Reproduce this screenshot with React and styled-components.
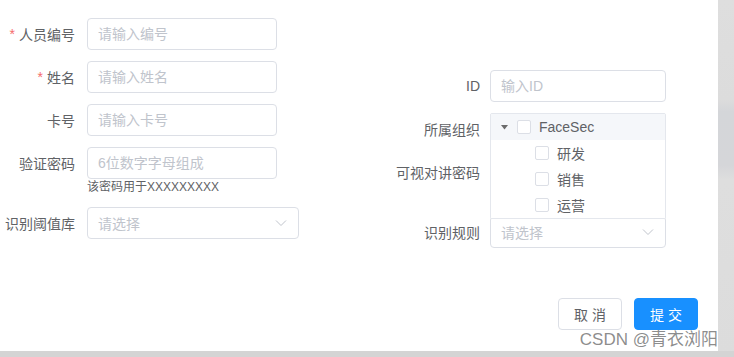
import React from "react";
import styled, { createGlobalStyle } from "styled-components";

const Global = createGlobalStyle`
  html, body {
    margin: 0;
    padding: 0;
    width: 734px;
    height: 357px;
    overflow: hidden;
    background: linear-gradient(to bottom, #dedede 0px, #dcdcdc 100px, #d4d6d9 112px, #d5d6d9 165px, #dedede 180px, #dcdcdc 357px);
  }
  * { box-sizing: border-box; }
  body {
    font-family: "Liberation Sans", "Noto Sans CJK SC", sans-serif;
  }
`;

const Page = styled.div`
  width: 734px;
  height: 357px;
  display: flex;
  flex-direction: column;
`;

const Panel = styled.div`
  width: 718px;
  height: 351px;
  background: #fff;
  position: relative;
  display: flex;
  flex-direction: column;
`;

const BottomStrip = styled.div`
  height: 6px;
  width: 734px;
  background: #d4d4d4;
`;

const FormArea = styled.div`
  display: flex;
  align-items: flex-start;
`;

const Column = styled.div`
  width: ${(p) => p.$w}px;
  padding-top: ${(p) => p.$top}px;
  display: flex;
  flex-direction: column;
`;

const FormItem = styled.div`
  display: flex;
  align-items: flex-start;
  margin-bottom: ${(p) => p.$mb ?? 11}px;
`;

const Label = styled.label`
  flex: none;
  width: ${(p) => p.$w}px;
  height: 32px;
  padding-right: ${(p) => p.$pr}px;
  display: flex;
  align-items: center;
  justify-content: flex-end;
  white-space: nowrap;
  font-size: 14px;
  color: #606266;
`;

const Star = styled.span`
  color: #f56c6c;
  margin-right: 4px;
`;

const Control = styled.div`
  position: relative;
  display: flex;
  flex-direction: column;
`;

const Input = styled.input`
  width: ${(p) => p.$w}px;
  height: 32px;
  border: 1px solid #dcdfe6;
  border-radius: 4px;
  padding: 0 10px;
  font-family: "Liberation Sans", "Noto Sans CJK SC", sans-serif;
  font-size: 14px;
  color: #606266;
  background: #fff;
  outline: none;
  &::placeholder {
    color: #c0c4cc;
  }
`;

const Helper = styled.div`
  font-size: 12px;
  line-height: 17px;
  color: #606266;
  white-space: nowrap;
`;

const SelectBox = styled.div`
  width: ${(p) => p.$w}px;
  height: 32px;
  border: 1px solid #dcdfe6;
  border-radius: 4px;
  padding: 0 11px 0 10px;
  display: flex;
  align-items: center;
  justify-content: space-between;
  background: #fff;
  font-size: 14px;
  color: #c0c4cc;
`;

const Chevron = () => (
  <svg width="12" height="8" viewBox="0 0 12 8">
    <polyline points="1,1.5 6,6.5 11,1.5" fill="none" stroke="#c0c4cc" strokeWidth="1" />
  </svg>
);

const TreePanel = styled.div`
  position: absolute;
  top: 0;
  left: 0;
  z-index: 2;
  width: 176px;
  background: #fff;
  border: 1px solid #e4e7ed;
  border-radius: 2px;
`;

const TreeRow = styled.div`
  height: 26px;
  display: flex;
  align-items: center;
  padding-left: ${(p) => 10 + p.$level * 18}px;
  background: ${(p) => (p.$active ? "#f5f7fa" : "#fff")};
  font-size: 14px;
  color: #606266;
`;

const Expander = styled.span`
  width: 7px;
  height: 7px;
  margin-right: 9px;
  display: flex;
  align-items: center;
  justify-content: center;
`;

const Check = styled.span`
  width: 14px;
  height: 14px;
  border: 1px solid #dcdfe6;
  border-radius: 2px;
  background: #fff;
  margin-right: 8px;
  flex: none;
`;

const Footer = styled.div`
  margin-top: auto;
  padding: 0 20px 21px 0;
  display: flex;
  justify-content: flex-end;
  gap: 12px;
`;

const Button = styled.button`
  width: 64px;
  height: 32px;
  border-radius: 4px;
  border: 1px solid ${(p) => (p.$primary ? "#1890ff" : "#dcdfe6")};
  background: ${(p) => (p.$primary ? "#1890ff" : "#fff")};
  color: ${(p) => (p.$primary ? "#fff" : "#606266")};
  font-family: "Liberation Sans", "Noto Sans CJK SC", sans-serif;
  font-size: 14px;
  padding: 0;
  cursor: pointer;
`;

const Watermark = styled.div`
  position: absolute;
  right: 0;
  bottom: 0;
  font-size: 17px;
  line-height: 22px;
  color: rgba(120, 120, 120, 0.85);
  white-space: nowrap;
  pointer-events: none;
`;

const TreeNode = ({ level, active, expander, children }) => (
  <TreeRow $level={level} $active={active}>
    <Expander>
      {expander && (
        <svg width="7" height="5" viewBox="0 0 7 5">
          <polygon points="0,0 7,0 3.5,4.5" fill="#6b6b6b" />
        </svg>
      )}
    </Expander>
    <Check />
    <span>{children}</span>
  </TreeRow>
);

export default function App() {
  return (
    <>
      <Global />
      <Page>
        <Panel>
          <FormArea>
            <Column $w={390} $top={18}>
              <FormItem>
                <Label $w={87} $pr={12}>
                  <Star>*</Star>人员编号
                </Label>
                <Input $w={190} placeholder="请输入编号" />
              </FormItem>
              <FormItem>
                <Label $w={87} $pr={12}>
                  <Star>*</Star>姓名
                </Label>
                <Input $w={190} placeholder="请输入姓名" />
              </FormItem>
              <FormItem>
                <Label $w={87} $pr={12}>卡号</Label>
                <Input $w={190} placeholder="请输入卡号" />
              </FormItem>
              <FormItem $mb={11}>
                <Label $w={87} $pr={12}>验证密码</Label>
                <Control>
                  <Input $w={190} placeholder="6位数字字母组成" />
                  <Helper>该密码用于XXXXXXXXX</Helper>
                </Control>
              </FormItem>
              <FormItem>
                <Label $w={87} $pr={12}>识别阈值库</Label>
                <SelectBox $w={212}>
                  <span>请选择</span>
                  <Chevron />
                </SelectBox>
              </FormItem>
            </Column>
            <Column $w={328} $top={70}>
              <FormItem>
                <Label $w={100} $pr={10}>ID</Label>
                <Input $w={176} placeholder="输入ID" />
              </FormItem>
              <FormItem>
                <Label $w={100} $pr={10}>所属组织</Label>
                <Control>
                  <SelectBox $w={176} />
                  <TreePanel>
                    <TreeNode level={0} active expander>FaceSec</TreeNode>
                    <TreeNode level={1}>研发</TreeNode>
                    <TreeNode level={1}>销售</TreeNode>
                    <TreeNode level={1}>运营</TreeNode>
                  </TreePanel>
                </Control>
              </FormItem>
              <FormItem $mb={28}>
                <Label $w={100} $pr={10}>可视对讲密码</Label>
                <Input $w={176} />
              </FormItem>
              <FormItem>
                <Label $w={100} $pr={10}>识别规则</Label>
                <SelectBox $w={176}>
                  <span>请选择</span>
                  <Chevron />
                </SelectBox>
              </FormItem>
            </Column>
          </FormArea>
          <Footer>
            <Button>取 消</Button>
            <Button $primary>提 交</Button>
          </Footer>
          <Watermark>CSDN @青衣浏阳</Watermark>
        </Panel>
        <BottomStrip />
      </Page>
    </>
  );
}
